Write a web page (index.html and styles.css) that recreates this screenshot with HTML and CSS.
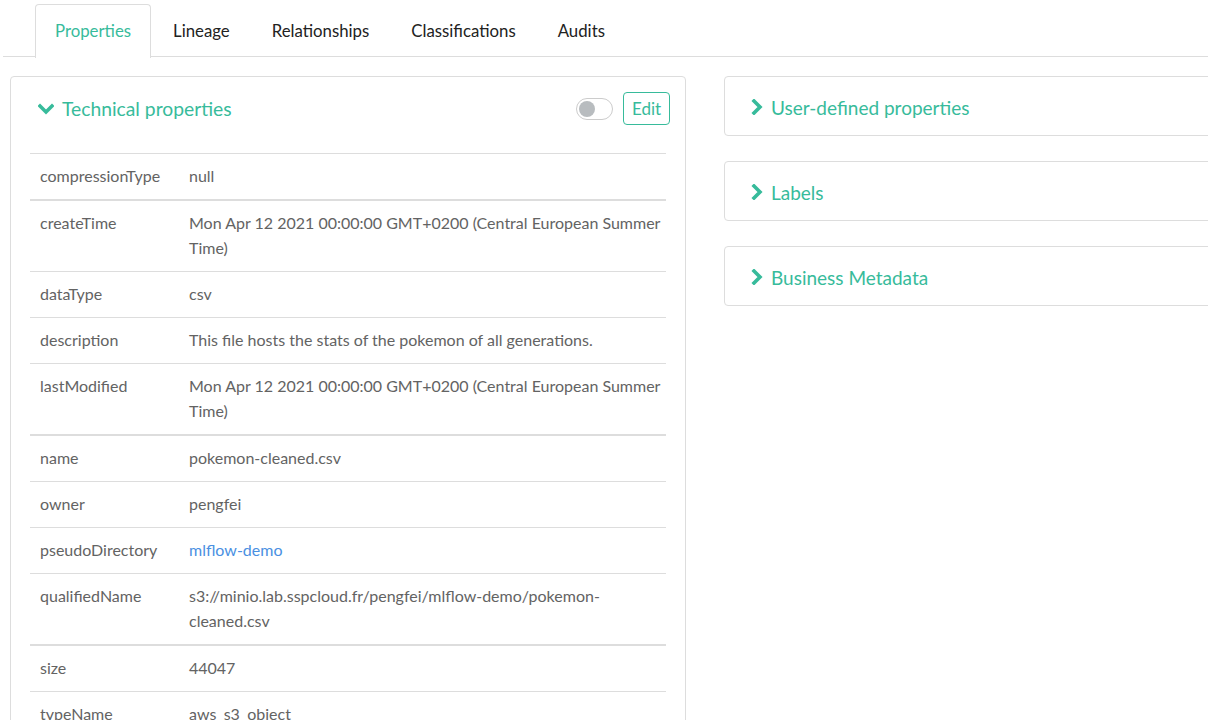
FILE: index.html
```html
<!DOCTYPE html>
<html>
<head>
<meta charset="utf-8">
<link rel="stylesheet" href="styles.css">
</head>
<body>
<div class="page">
  <ul class="tabs">
    <li class="tab active">Properties</li>
    <li class="tab">Lineage</li>
    <li class="tab">Relationships</li>
    <li class="tab">Classifications</li>
    <li class="tab">Audits</li>
  </ul>
  <div class="columns">
    <div class="panel left">
      <div class="panel-head">
        <svg class="chev-down" width="16" height="12" viewBox="0 0 16 12"><polyline points="2,3 8,9 14,3" fill="none" stroke="#37bb9b" stroke-width="3.6" stroke-linecap="square"/></svg>
        <span class="title">Technical properties</span>
        <span class="spacer"></span>
        <span class="toggle"><span class="knob"></span></span>
        <button class="edit">Edit</button>
      </div>
      <table class="props">
        <tr><td class="k">compressionType</td><td class="v">null</td></tr>
        <tr class="thick"><td class="k">createTime</td><td class="v">Mon Apr 12 2021 00:00:00 GMT+0200 (Central European Summer Time)</td></tr>
        <tr><td class="k">dataType</td><td class="v">csv</td></tr>
        <tr><td class="k">description</td><td class="v">This file hosts the stats of the pokemon of all generations.</td></tr>
        <tr><td class="k">lastModified</td><td class="v">Mon Apr 12 2021 00:00:00 GMT+0200 (Central European Summer Time)</td></tr>
        <tr class="thick"><td class="k">name</td><td class="v">pokemon-cleaned.csv</td></tr>
        <tr><td class="k">owner</td><td class="v">pengfei</td></tr>
        <tr><td class="k">pseudoDirectory</td><td class="v"><a class="link">mlflow-demo</a></td></tr>
        <tr><td class="k">qualifiedName</td><td class="v">s3://minio.lab.sspcloud.fr/pengfei/mlflow-demo/pokemon-cleaned.csv</td></tr>
        <tr class="thick"><td class="k">size</td><td class="v">44047</td></tr>
        <tr><td class="k">typeName</td><td class="v">aws_s3_object</td></tr>
      </table>
    </div>
    <div class="right">
      <div class="panel small">
        <svg class="chev-right" width="12" height="16" viewBox="0 0 12 16"><polyline points="3,2 9,8 3,14" fill="none" stroke="#37bb9b" stroke-width="3.6" stroke-linecap="square"/></svg>
        <span class="title">User-defined properties</span>
      </div>
      <div class="panel small">
        <svg class="chev-right" width="12" height="16" viewBox="0 0 12 16"><polyline points="3,2 9,8 3,14" fill="none" stroke="#37bb9b" stroke-width="3.6" stroke-linecap="square"/></svg>
        <span class="title">Labels</span>
      </div>
      <div class="panel small">
        <svg class="chev-right" width="12" height="16" viewBox="0 0 12 16"><polyline points="3,2 9,8 3,14" fill="none" stroke="#37bb9b" stroke-width="3.6" stroke-linecap="square"/></svg>
        <span class="title">Business Metadata</span>
      </div>
    </div>
  </div>
</div>
</body>
</html>
```
FILE: styles.css
```css
html, body {
  margin: 0;
  padding: 0;
  background: #fff;
  overflow: hidden;
}
body {
  font-family: "Lato", "Open Sans", sans-serif;
  font-size: 16px;
  color: #636363;
}
.page {
  width: 1500px;
}
.tabs {
  list-style: none;
  margin: 4px 0 0 3px;
  padding: 0 0 0 32px;
  display: flex;
  border-bottom: 1px solid #ddd;
  height: 52px;
}
.tab {
  padding: 0 19px;
  margin-right: 2px;
  line-height: 52px;
  font-size: 16.8px;
  color: #222;
  border: 1px solid transparent;
  border-bottom: none;
  border-radius: 4px 4px 0 0;
}
.tab.active {
  color: #37bb9b;
  border-color: #ddd;
  background: #fff;
  height: 53px;
}
.columns {
  display: grid;
  grid-template-columns: 676px 676px;
  gap: 38px;
  margin: 19px 0 0 10px;
}
.panel {
  border: 1px solid #ddd;
  border-radius: 4px;
  background: #fff;
}
.left {
  padding: 0 19px 0 19px;
  height: 700px;
}
.panel-head {
  display: flex;
  align-items: center;
  height: 62px;
  margin-bottom: 14px;
  padding: 0 0 0 8px;
}
.title {
  color: #37bb9b;
  font-size: 19.3px;
}
.chev-down {
  margin-right: 8px;
  margin-top: 2px;
}
.spacer { flex: 1; }
.toggle {
  width: 35px;
  height: 20px;
  border: 1px solid #ccc;
  border-radius: 11px;
  position: relative;
  margin-right: 10px;
  margin-top: 1px;
}
.knob {
  position: absolute;
  left: 2px;
  top: 2px;
  width: 16px;
  height: 16px;
  border-radius: 50%;
  background: #b8bcbf;
}
.edit {
  font-family: inherit;
  font-size: 17px;
  color: #37bb9b;
  background: #fff;
  border: 1px solid #37bb9b;
  border-radius: 4px;
  width: 47px;
  height: 33px;
  padding: 0;
  margin-right: -4px;
}
.props {
  width: 636px;
  border-collapse: collapse;
  margin-top: 0;
}
.props td {
  border-top: 1px solid #ddd;
  padding: 9px 10px 11px;
  line-height: 25px;
  vertical-align: top;
}
.props td.v {
  padding-right: 0;
}
.props tr.thick td {
  border-top: 2px solid #ddd;
}
.props td.k {
  width: 129px;
}
.link {
  color: #4a90e2;
}
.right {
  display: flex;
  flex-direction: column;
  gap: 25px;
}
.small {
  height: 58px;
  display: flex;
  align-items: center;
  padding-left: 26px;
}
.small .title {
  font-size: 19px;
  margin-top: 3px;
}
.chev-right {
  margin-right: 8px;
  margin-top: 1px;
}
```
